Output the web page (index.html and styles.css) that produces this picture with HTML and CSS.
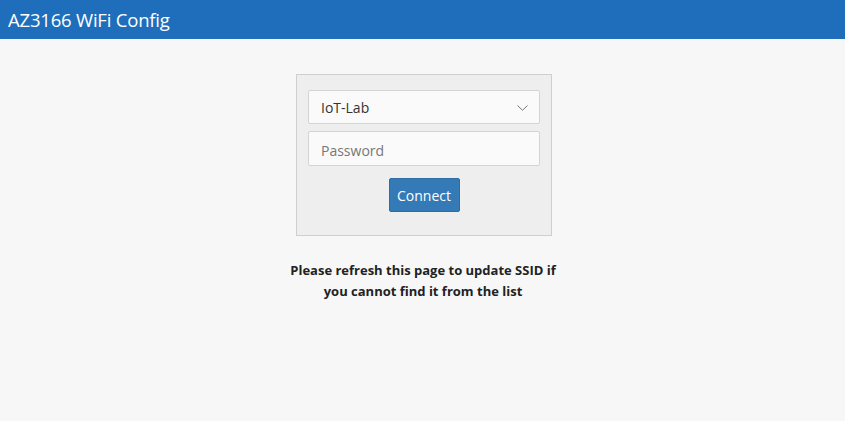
FILE: index.html
```html
<!DOCTYPE html>
<html>
<head>
<meta charset="utf-8">
<link rel="stylesheet" href="styles.css">
</head>
<body>
<header class="topbar">AZ3166 WiFi Config</header>
<main class="content">
  <form class="card">
    <div class="select">
      <span>IoT-Lab</span>
      <svg class="chev" width="11" height="6" viewBox="0 0 11 6"><path d="M0.5 0.5 L5.5 5.3 L10.5 0.5" fill="none" stroke="#777" stroke-width="1"/></svg>
    </div>
    <div class="input">Password</div>
    <div class="actions"><button type="button" class="btn">Connect</button></div>
  </form>
  <p class="note">Please refresh this page to update SSID if<br>you cannot find it from the list</p>
</main>
</body>
</html>
```
FILE: styles.css
```css
html, body { margin: 0; padding: 0; }
body {
  background: #f7f7f7;
  font-family: "Open Sans", "Noto Sans", sans-serif;
  color: #333;
  width: 845px;
  height: 421px;
  overflow: hidden;
}
.topbar {
  height: 39px;
  background: #1e6ebc;
  color: #fff;
  font-size: 18.5px;
  line-height: 39px;
  padding-left: 8px;
  letter-spacing: -0.2px;
}
.content {
  display: flex;
  flex-direction: column;
  align-items: center;
  padding-top: 35px;
}
.card {
  box-sizing: border-box;
  width: 256px;
  height: 162px;
  margin: 0 0 0 3px;
  background: #eeeeee;
  border: 1px solid #cfcfcf;
  padding: 15px 11px 0 11px;
  display: flex;
  flex-direction: column;
}
.select, .input {
  box-sizing: border-box;
  width: 232px;
  height: 34px;
  background: #fafafa;
  border: 1px solid #d4d4d4;
  border-radius: 2px;
  display: flex;
  align-items: center;
  padding: 0 12px;
  font-size: 14px;
}
.select { justify-content: space-between; color: #333; }
.input { margin-top: 7px; height: 35px; color: #777; padding-top: 3px; }
.chev { margin-right: -1px; margin-top: 1px; }
.actions { display: flex; justify-content: center; margin-top: 12px; }
.btn {
  box-sizing: border-box;
  width: 71px;
  height: 34px;
  background: #337ab7;
  border: 1px solid #2e6da4;
  border-radius: 2px;
  color: #fff;
  font-family: inherit;
  font-size: 14px;
  padding: 0;
}
.note {
  margin: 24px 0 0 1px;
  text-align: center;
  font-weight: bold;
  font-size: 13px;
  line-height: 21px;
  color: #222;
}
```
